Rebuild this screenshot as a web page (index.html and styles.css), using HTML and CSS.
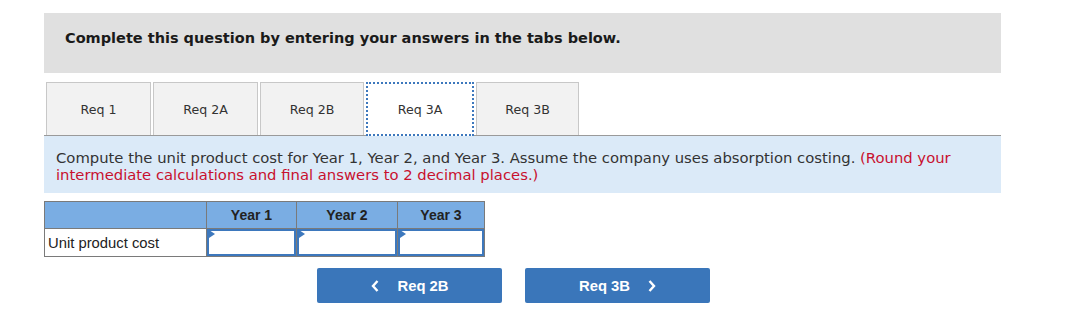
FILE: index.html
```html
<!DOCTYPE html>
<html>
<head>
<meta charset="utf-8">
<link rel="stylesheet" href="styles.css">
</head>
<body>
<div class="wrap">
  <div class="banner">Complete this question by entering your answers in the tabs below.</div>
  <div class="tabs">
    <div class="tab t1">Req 1</div>
    <div class="tab t2">Req 2A</div>
    <div class="tab t3">Req 2B</div>
    <div class="tab active">Req 3A</div>
    <div class="tab t5">Req 3B</div>
  </div>
  <div class="instr">Compute the unit product cost for Year 1, Year 2, and Year 3. Assume the company uses absorption costing. <span class="red">(Round your intermediate calculations and final answers to 2 decimal places.)</span></div>
  <table class="grid">
    <tr class="head">
      <th class="c0"></th>
      <th class="c1">Year 1</th>
      <th class="c2">Year 2</th>
      <th class="c3">Year 3</th>
    </tr>
    <tr>
      <td class="label">Unit product cost</td>
      <td class="inp"><div class="box"></div></td>
      <td class="inp"><div class="box"></div></td>
      <td class="inp"><div class="box"></div></td>
    </tr>
  </table>
  <div class="nav">
    <div class="btn"><svg class="chev l" width="8" height="12" viewBox="0 0 8 12"><path d="M6.5 1 L2 6 L6.5 11" fill="none" stroke="#fff" stroke-width="2.4"/></svg>Req 2B</div>
    <div class="btn">Req 3B<svg class="chev r" width="8" height="12" viewBox="0 0 8 12"><path d="M1.5 1 L6 6 L1.5 11" fill="none" stroke="#fff" stroke-width="2.4"/></svg></div>
  </div>
</div>
</body>
</html>
```
FILE: styles.css
```css
html, body { margin: 0; padding: 0; background: #fff; }
body { font-family: "DejaVu Sans", Verdana, sans-serif; color: #222; }
.wrap { margin: 13px 0 0 44px; width: 957px; }
.banner {
  height: 60px; background: #e0e0e0; box-sizing: border-box;
  padding: 17px 0 0 21px; font-weight: bold; font-size: 14.5px; color: #1a1a1a;
}
.tabs { display: flex; gap: 2px; margin-top: 9px; padding-left: 2px; border-bottom: 1px solid #9a9a9a; }
.tab {
  width: 105px; height: 53px; box-sizing: border-box; background: #f2f2f2;
  border: 1px solid #c8c8c8; border-bottom: none;
  display: flex; align-items: center; justify-content: center;
  font-size: 12.6px; color: #333;
}
.tab.t3 { width: 104px; }
.tab.t5 { width: 103px; }
.tab.active { background: #fff; border: 2px dotted #3d78bd; width: 108px; margin-bottom: -1px; height: 54px; }
.instr {
  background: #dbeaf8; height: 57px; box-sizing: border-box; padding: 13px 0 0 12px;
  font-size: 14.8px; line-height: 17px; color: #333;
}
.red { color: #c8102e; }
.grid { margin-top: 8px; border-collapse: collapse; font-family: "Liberation Sans", Arial, sans-serif; }
.grid th, .grid td { border: 1px solid #7a7a7a; padding: 0; }
.head th { background: #7aade3; height: 26px; font-size: 14px; font-weight: bold; color: #222; }
.c0 { width: 161px; } .c1 { width: 89px; } .c2 { width: 100px; } .c3 { width: 86px; }
.label { height: 26px; font-size: 14.8px; color: #222; padding-left: 3px !important; }
.inp { position: relative; }
.box { height: 23px; border: 2px solid #3d78bd; background: #fff; position: relative; }
.box::before {
  content: ""; position: absolute; left: 0; top: -1px;
  border-left: 6px solid #3d78bd; border-top: 4px solid transparent; border-bottom: 4px solid transparent;
}
.nav { display: flex; gap: 23px; margin: 11px 0 0 273px; }
.btn {
  width: 185px; height: 35px; background: #3a76ba; border-radius: 2px; color: #fff;
  font-family: "Liberation Sans", Arial, sans-serif; font-weight: bold; font-size: 14.8px;
  display: flex; align-items: center; justify-content: center;
}
.chev.l { margin: 0 19px 0 0; }
.chev.r { margin: 0 0 0 18px; }
```
